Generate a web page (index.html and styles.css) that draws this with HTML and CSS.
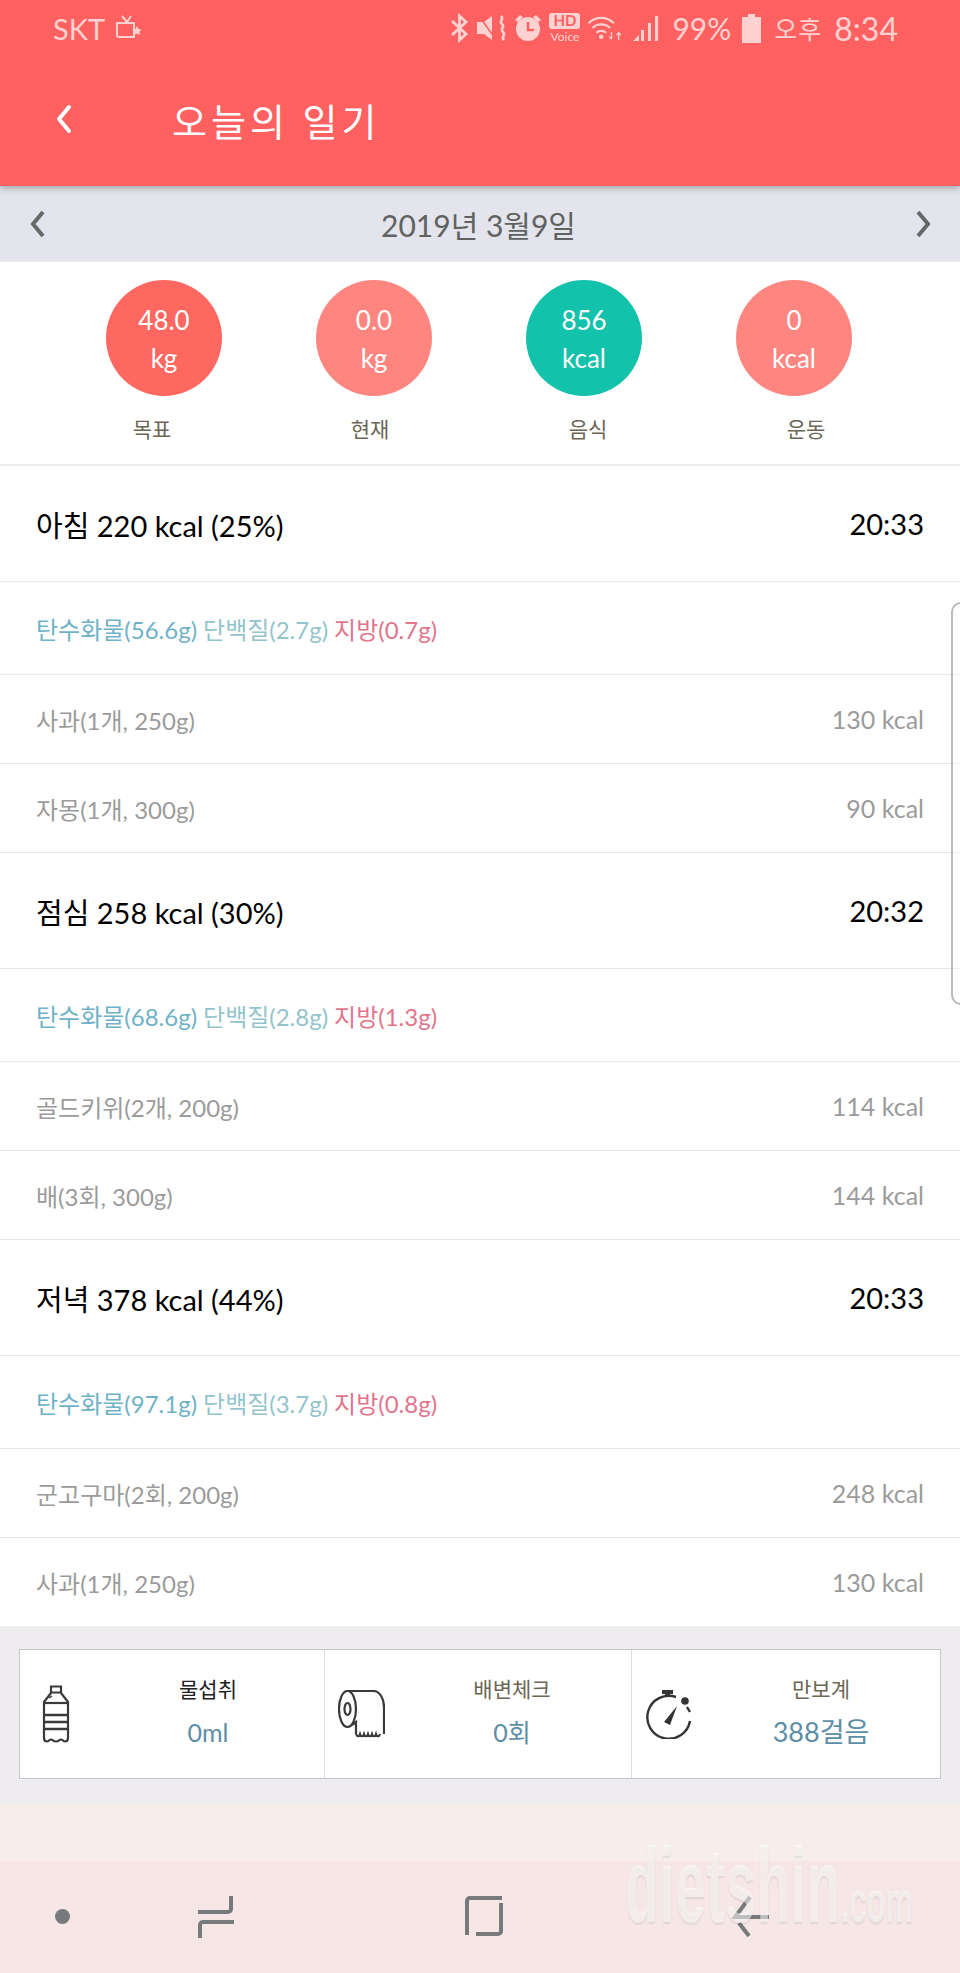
FILE: index.html
```html
<!DOCTYPE html>
<html lang="ko">
<head>
  <meta charset="UTF-8">
  <title>오늘의 일기</title>
  <link rel="stylesheet" href="styles.css">
</head>
<body>
  <div id="phone">

    <div id="header">
      <div id="statusbar">
        <div class="status-left">
          <span>SKT</span>
          <svg width="30" height="30" viewBox="0 0 30 30" fill="none" stroke="currentColor" stroke-width="2"><path d="M9 3l5 6 4-6M4 10h17v14H6a2 2 0 0 1-2-2z"/><path d="M24 13l1.500 3 3 .5-2.200 2.200.6 3.300-2.900-1.600-2.900 1.600.6-3.300-2.200-2.200 3-.5z" fill="currentColor" stroke="none"/></svg>
        </div>
        <div class="status-right">
          <svg width="19" height="30" viewBox="0 0 19 30" fill="none" stroke="currentColor" stroke-width="2.800"><path d="M2 8l14 13-6.500 6V3l6.500 6L2 22"/></svg>
          <svg width="31" height="30" viewBox="0 0 31 30" fill="currentColor"><path d="M1 9h7l8-6v24l-8-6H1z"/><path d="M3 3l18 25" stroke="#ff6161" stroke-width="1.600"/><path d="M25 3c4 4-3 5 1 8s-3 4 1 8-3 4 1 8" fill="none" stroke="currentColor" stroke-width="2.600"/></svg>
          <svg width="28" height="30" viewBox="0 0 28 30" fill="currentColor"><circle cx="14" cy="16" r="12"/><path d="M1 7l5-5 3 2-5 5zM27 7l-5-5-3 2 5 5z"/><path d="M14 9v8h6" fill="none" stroke="#ff6161" stroke-width="2.400"/></svg>
          <div class="hd-voice"><b>HD</b><i>Voice</i></div>
          <svg width="38" height="28" viewBox="0 0 48 34" fill="none" stroke="currentColor" stroke-width="2.800"><path d="M2 11c9-9 23-9 32 0M7 17c6-6 16-6 22 0M12 23c3-3 9-3 12 0"/><circle cx="18" cy="28" r="2.800" fill="currentColor" stroke="none"/><path d="M31 22v9M28 28l3 3M40 32v-9M37 26l3-3 3 3" stroke-width="1.600"/></svg>
          <svg width="28" height="30" viewBox="0 0 28 30" fill="currentColor"><path d="M1 28l6-6v6zM9 28V17h3v11zM16 28V10h3v18zM23 28V3h3v25z"/></svg>
          <span class="pct">99%</span>
          <svg class="battery" width="19" height="30" viewBox="0 0 19 30" fill="currentColor"><path d="M6 1h7v3h6v26H0V4h6z"/></svg>
          <span class="ampm">오후</span>
          <span class="status-time">8:34</span>
        </div>
      </div>
      <div id="titlebar">
        <svg class="back" width="20" height="32" viewBox="0 0 20 32" fill="none" stroke="#fff" stroke-width="4" stroke-linecap="round" stroke-linejoin="round"><path d="M15 4L5 16l10 12"/></svg>
        <h1>오늘의 일기</h1>
      </div>
    </div>

    <div id="datebar">
      <svg width="20" height="32" viewBox="0 0 20 32" fill="none" stroke="#646a68" stroke-width="4"><path d="M16 4L6 16l10 12"/></svg>
      <span class="date">2019년 3월9일</span>
      <svg width="20" height="32" viewBox="0 0 20 32" fill="none" stroke="#646a68" stroke-width="4"><path d="M4 4l10 12L4 28"/></svg>
    </div>

    <div id="summary">
      <div class="circles">
        <div class="circle red"><span>48.0</span><span>kg</span></div>
        <div class="circle pink"><span>0.0</span><span>kg</span></div>
        <div class="circle green"><span>856</span><span>kcal</span></div>
        <div class="circle pink"><span>0</span><span>kcal</span></div>
      </div>
      <div class="labels">
        <span>목표</span><span>현재</span><span>음식</span><span>운동</span>
      </div>
    </div>

    <div id="meals">
      <div class="row meal"><span>아침 220 kcal (25%)</span><span>20:33</span></div>
      <div class="row macro"><span class="carb">탄수화물(56.6g)</span> <span class="protein">단백질(2.7g)</span> <span class="fat">지방(0.7g)</span></div>
      <div class="row food"><span>사과(1개, 250g)</span><span>130 kcal</span></div>
      <div class="row food"><span>자몽(1개, 300g)</span><span>90 kcal</span></div>

      <div class="row meal"><span>점심 258 kcal (30%)</span><span>20:32</span></div>
      <div class="row macro"><span class="carb">탄수화물(68.6g)</span> <span class="protein">단백질(2.8g)</span> <span class="fat">지방(1.3g)</span></div>
      <div class="row food"><span>골드키위(2개, 200g)</span><span>114 kcal</span></div>
      <div class="row food"><span>배(3회, 300g)</span><span>144 kcal</span></div>

      <div class="row meal"><span>저녁 378 kcal (44%)</span><span>20:33</span></div>
      <div class="row macro"><span class="carb">탄수화물(97.1g)</span> <span class="protein">단백질(3.7g)</span> <span class="fat">지방(0.8g)</span></div>
      <div class="row food"><span>군고구마(2회, 200g)</span><span>248 kcal</span></div>
      <div class="row food last"><span>사과(1개, 250g)</span><span>130 kcal</span></div>
    </div>

    <div id="tracker">
      <div class="tracker-card">
        <div class="cell">
          <svg class="cell-icon icon-bottle" width="28" height="58" viewBox="0 0 28 58" fill="none" stroke="#3a3a3a" stroke-width="2.200"><path d="M9 1.500h10v6H9zM9 8L2 17v36c0 2 1 3.500 3 3.500 2 0 2-2 4-2s2 2 5 2 3-2 5-2 2 2 4 2 3-1.500 3-3.500V17l-7-9"/><path d="M2 18h24"/><path d="M2 30h24M2 37h24M2 44h24" stroke-width="2.400"/><path d="M7 13l3-2" stroke-width="1.500"/></svg>
          <div class="cell-text"><span class="cell-title dark">물섭취</span><span class="cell-value">0ml</span></div>
        </div>
        <div class="cell">
          <svg class="cell-icon icon-roll" width="47" height="48" viewBox="0 0 47 48" fill="none" stroke="#3a3a3a" stroke-width="2.200"><ellipse cx="9.500" cy="19" rx="8.500" ry="18"/><ellipse cx="9.500" cy="19" rx="3" ry="6"/><path d="M9.500 1H35c7 0 11 8 11 16v27"/><path d="M14 35l4-3v12"/><path d="M18 44c1.500 3 3 3 4 0 1 3 3 3 4 0 1 3 3 3 4 0 1 3 3 3 4 0 1 3 3 3 4 0 1 3 3 3 4 0"/></svg>
          <div class="cell-text"><span class="cell-title">배변체크</span><span class="cell-value">0회</span></div>
        </div>
        <div class="cell">
          <svg class="cell-icon icon-watch" width="47" height="50" viewBox="0 0 47 50" fill="none" stroke="#333" stroke-width="2.400"><path d="M45 32A21.500 21.500 0 1 1 31 8"/><path d="M42 18l3 5"/><path d="M17 1h11v4h-3v3h-5V5h-3z" fill="#333" stroke="none"/><circle cx="40" cy="12" r="3.800" fill="#333" stroke="none"/><path d="M19 33L32 17 25 36z" fill="#333" stroke="none"/></svg>
          <div class="cell-text"><span class="cell-title">만보계</span><span class="cell-value big">388걸음</span></div>
        </div>
      </div>
    </div>

    <div id="bottom-strip"></div>

    <div id="navbar">
      <div class="nav-dot"></div>
      <svg width="40" height="44" viewBox="0 0 40 44" fill="none" stroke="#77797b" stroke-width="4"><path d="M35 1v13a3 3 0 0 1-3 3H2M38 27H7a3 3 0 0 0-3 3v13"/></svg>
      <svg width="40" height="42" viewBox="0 0 40 42" fill="none" stroke="#77797b" stroke-width="4"><path d="M38 3H6a3 3 0 0 0-3 3v34M37 8v28a3 3 0 0 1-3 3H12"/></svg>
      <svg width="40" height="42" viewBox="0 0 40 42" fill="none" stroke="#77797b" stroke-width="4"><path d="M18 2L3 22h34M7 28l10 13"/></svg>
    </div>

    <div id="edge-handle"></div>
    <div id="watermark">dietshin<small>.com</small></div>
  </div>
</body>
</html>
```

FILE: styles.css
```css
* {
  box-sizing: border-box;
}

body {
  margin: 0;
  font-family: "Lato", "Noto Sans CJK KR", sans-serif;
  background-color: #fff;
}

#phone {
  position: relative;
  width: 960px;
  height: 1973px;
  overflow: hidden;
  display: flex;
  flex-direction: column;
}

/* header */
#header {
  height: 186px;
  background-color: #ff6161;
  box-shadow: 0 3px 6px rgba(0, 0, 0, 0.25);
  position: relative;
  z-index: 2;
}

#statusbar {
  height: 56px;
  padding: 0 62px 0 53px;
  display: flex;
  justify-content: space-between;
  align-items: center;
  color: #ffd2d2;
  font-size: 29px;
}

.status-left,
.status-right {
  display: flex;
  align-items: center;
  gap: 8px;
}

.status-right {
  gap: 7px;
}

.hd-voice {
  display: flex;
  flex-direction: column;
  align-items: center;
  width: 31px;
  line-height: 1;
}

.hd-voice b {
  width: 31px;
  height: 16px;
  background-color: #ffd2d2;
  border-radius: 3px;
  color: #ff6161;
  font-size: 15px;
  text-align: center;
}

.hd-voice i {
  font-size: 12px;
  font-style: normal;
  margin-top: 2px;
}

.pct {
  margin-left: 5px;
  font-size: 30px;
}

.battery {
  margin-left: 4px;
}

.ampm {
  margin-left: 6px;
  font-size: 25px;
  letter-spacing: 1px;
}

.status-time {
  margin-left: 5px;
  font-size: 32px;
}

#titlebar {
  height: 130px;
  padding: 0 0 4px 54px;
  display: flex;
  align-items: center;
}

#titlebar h1 {
  margin: 0 0 0 98px;
  font-size: 38px;
  font-weight: 400;
  letter-spacing: 4px;
  color: #fff;
}

/* date bar */
#datebar {
  height: 75px;
  background-color: #e4e4ec;
  padding: 0 26px 0 27px;
  display: flex;
  justify-content: space-between;
  align-items: center;
}

.date {
  font-size: 30px;
  color: #5f6260;
  margin-right: 4px;
}

/* summary */
#summary {
  height: 205px;
  border-top: 1px solid #ececf0;
  border-bottom: 2px solid #ececee;
  background-color: #fff;
}

.circles {
  padding: 18px 0 0 59px;
  display: grid;
  grid-template-columns: repeat(4, 210px);
}

.circle {
  width: 116px;
  height: 116px;
  margin: 0 auto;
  padding-top: 2px;
  border-radius: 50%;
  color: #fff;
  font-size: 26px;
  display: flex;
  flex-direction: column;
  align-items: center;
  justify-content: center;
  gap: 8px;
  line-height: 30px;
}

.red { background-color: #ff6860; }
.pink { background-color: #ff8680; }
.green { background-color: #12c2aa; }

.labels {
  padding: 18px 0 0 43px;
  display: grid;
  grid-template-columns: repeat(4, 218px);
  text-align: center;
  font-size: 21px;
  line-height: 30px;
  color: #6b6656;
}

/* meal rows */
.row {
  display: flex;
  align-items: center;
  padding: 0 36px;
  border-bottom: 1px solid #e6e6e6;
}

.meal {
  height: 116px;
  justify-content: space-between;
  font-size: 29px;
  color: #000;
}

.macro {
  height: 93px;
  gap: 6px;
  font-size: 24px;
}

.food {
  height: 89px;
  justify-content: space-between;
  font-size: 24px;
  color: #9b9b9b;
}

.food span:last-child {
  font-size: 25px;
}

.food.last {
  height: 88px;
  border-bottom: none;
}

.carb { color: #6fb2c8; }
.protein { color: #93c4cc; }
.fat { color: #e2758c; }

/* tracker card */
#tracker {
  height: 179px;
  background-color: #eeecee;
  padding: 23px 19px 26px;
}

.tracker-card {
  height: 130px;
  background-color: #fff;
  border: 1px solid #c6c6ca;
  display: grid;
  grid-template-columns: 305px 307px 1fr;
}

.cell {
  display: flex;
  align-items: center;
  padding-left: 13px;
  border-right: 1px solid #dedee2;
}

.cell:last-child {
  border-right: none;
}

.cell-icon {
  flex: none;
}

.icon-bottle {
  margin: 0 22px 0 9px;
}

.icon-roll {
  margin-right: 8px;
}

.icon-watch {
  margin-right: 10px;
}

.cell-text {
  flex: 1;
  display: flex;
  flex-direction: column;
  align-items: center;
  gap: 12px;
  padding-bottom: 6px;
}

.cell-title {
  font-size: 21px;
  line-height: 30px;
  color: #6b6656;
}

.cell-title.dark {
  color: #222;
}

.cell-value {
  font-size: 25px;
  line-height: 32px;
  color: #5d8ea6;
}

.cell-value.big {
  font-size: 27px;
}

/* bottom */
#bottom-strip {
  height: 56px;
  background-color: #f7eee9;
}

#navbar {
  flex: 1;
  background-color: #f6e6e6;
  padding: 34px 0 0 55px;
  display: grid;
  grid-template-columns: 141px 268px 268px 40px;
  align-items: start;
}

.nav-dot {
  width: 15px;
  height: 15px;
  margin-top: 14px;
  border-radius: 50%;
  background-color: #77797b;
}

/* overlays */
#edge-handle {
  position: absolute;
  top: 602px;
  left: 951px;
  width: 20px;
  height: 403px;
  border: 2px solid #bbb;
  border-radius: 12px;
  background-color: rgba(255, 255, 255, 0.4);
}

#watermark {
  position: absolute;
  left: 625px;
  top: 1834px;
  font-family: "Liberation Sans", sans-serif;
  font-size: 82px;
  font-weight: 700;
  line-height: 1;
  letter-spacing: 1px;
  color: rgba(255, 255, 255, 0.55);
  text-shadow: 0 1px 2px rgba(0, 0, 0, 0.08);
  transform: scale(0.67, 1.28);
  transform-origin: left top;
  pointer-events: none;
}

#watermark small {
  font-size: 46px;
  letter-spacing: 0;
}
```
